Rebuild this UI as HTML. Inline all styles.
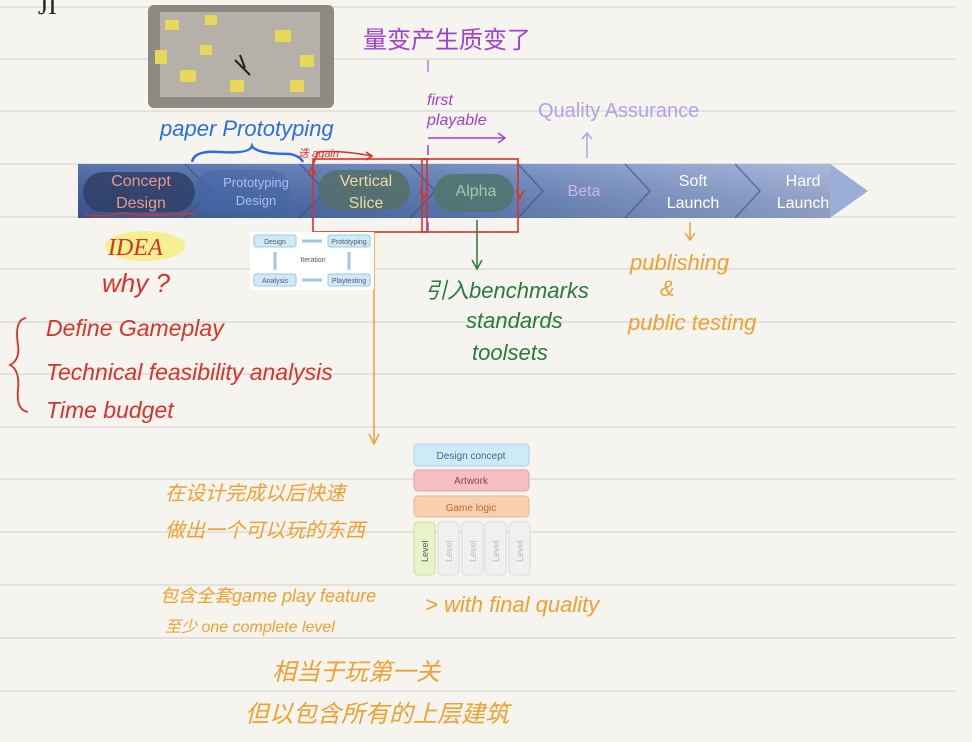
<!DOCTYPE html>
<html><head><meta charset="utf-8"><style>
body{margin:0;width:972px;height:742px;overflow:hidden;background:#f6f4ef;font-family:"Liberation Sans","Noto Sans CJK SC",sans-serif}
svg{position:absolute;left:0;top:0}
</style></head><body>
<svg width="972" height="742" viewBox="0 0 972 742" xmlns="http://www.w3.org/2000/svg">
<defs>
<linearGradient id="bar" x1="0" x2="1" y1="0" y2="0"><stop offset="0" stop-color="#3b5c9e"/><stop offset="0.5" stop-color="#5d7cb8"/><stop offset="1" stop-color="#9cadd6"/></linearGradient>
<linearGradient id="bv" x1="0" x2="0" y1="0" y2="1"><stop offset="0" stop-color="#fff" stop-opacity="0.15"/><stop offset="1" stop-color="#000" stop-opacity="0.1"/></linearGradient>
</defs>
<g stroke="#d9d7d1" stroke-width="1.3">
<line x1="0" y1="7" x2="955" y2="7"/><line x1="0" y1="59" x2="955" y2="59"/><line x1="0" y1="111" x2="955" y2="111"/><line x1="0" y1="164" x2="955" y2="164"/><line x1="0" y1="217" x2="955" y2="217"/><line x1="0" y1="269" x2="955" y2="269"/><line x1="0" y1="322" x2="955" y2="322"/><line x1="0" y1="374" x2="955" y2="374"/><line x1="0" y1="427" x2="955" y2="427"/><line x1="0" y1="479" x2="955" y2="479"/><line x1="0" y1="532" x2="955" y2="532"/><line x1="0" y1="585" x2="955" y2="585"/><line x1="0" y1="638" x2="955" y2="638"/><line x1="0" y1="691" x2="955" y2="691"/>
</g>
<text x="38" y="14" font-size="26" font-family="Liberation Serif" fill="#222">JI</text>
<!-- photo -->
<rect x="148" y="5" width="186" height="103" rx="6" fill="#8d8a84"/>
<rect x="160" y="12" width="160" height="85" fill="#b5b1a8"/>
<g fill="#e8d85a"><rect x="165" y="20" width="14" height="10"/><rect x="205" y="15" width="12" height="10"/><rect x="275" y="30" width="16" height="12"/><rect x="300" y="55" width="14" height="12"/><rect x="180" y="70" width="16" height="12"/><rect x="230" y="80" width="14" height="12"/><rect x="200" y="45" width="12" height="10"/><rect x="290" y="80" width="14" height="12"/><rect x="155" y="50" width="12" height="14"/></g>
<path d="M235 60 L250 75 M240 55 L245 68" stroke="#222" stroke-width="2"/>
<!-- bar -->
<rect x="78" y="164" width="752" height="54" fill="url(#bar)"/>
<path d="M830 164 L868 191 L830 218Z" fill="#9cadd6"/>
<rect x="78" y="164" width="752" height="54" fill="url(#bv)"/>
<g stroke="#2f4c85" stroke-opacity="0.6" fill="none" stroke-width="1.5">
<path d="M185 164 L210 191 L185 218"/><path d="M300 164 L325 191 L300 218"/><path d="M410 164 L435 191 L410 218"/><path d="M518 164 L543 191 L518 218"/><path d="M625 164 L650 191 L625 218"/><path d="M735 164 L760 191 L735 218"/></g>
<rect x="83" y="172" width="112" height="40" rx="20" fill="#2e3d63" opacity="0.8"/>
<rect x="195" y="170" width="95" height="42" rx="20" fill="#4668a8" opacity="0.6"/>
<rect x="318" y="170" width="92" height="40" rx="20" fill="#566e66" opacity="0.85"/>
<rect x="434" y="174" width="80" height="38" rx="19" fill="#4f7570" opacity="0.9"/>
<g font-size="16" text-anchor="middle">
<text x="141" y="186" fill="#e39a8a">Concept</text><text x="141" y="208" fill="#e39a8a">Design</text>
<text x="256" y="187" font-size="13" fill="#a9c0e8">Prototyping</text><text x="256" y="205" font-size="13" fill="#a9c0e8">Design</text>
<text x="366" y="186" fill="#e8dca8">Vertical</text><text x="366" y="208" fill="#e8dca8">Slice</text>
<text x="476" y="196" fill="#a8c8a8">Alpha</text>
<text x="584" y="196" fill="#c9b8e8">Beta</text>
<text x="693" y="186" fill="#fff">Soft</text><text x="693" y="208" fill="#fff">Launch</text>
<text x="803" y="186" fill="#fff">Hard</text><text x="803" y="208" fill="#fff">Launch</text>
</g>
<!-- red boxes -->
<g stroke="#d8322a" stroke-width="1.6" fill="none">
<rect x="313" y="159" width="114" height="73"/><rect x="422" y="159" width="96" height="73"/>
<path d="M313 165 L318 152 Q340 150 372 156 M366 152 l6 4 l-6 4"/><path d="M316 175 l-4 -8 l-4 8"/><path d="M420 190 l4 8 l4 -8"/><path d="M516 190 l4 8 l4 -8"/><path d="M371 237 l-6 4 l6 4"/>
<path d="M84 214 Q100 218 120 213 Q150 217 195 213"/></g>
<text x="298" y="157" font-size="11" fill="#d8322a" font-style="italic">迭 again</text>
<line x1="374" y1="232" x2="374" y2="442" stroke="#f0a030" stroke-width="1.5"/><path d="M369 434 l5 10 l5 -10" stroke="#f0a030" fill="none" stroke-width="1.5"/>
<!-- paper prototyping -->
<text x="160" y="136" font-size="22" fill="#2a6ee0" font-style="italic">paper  Prototyping</text>
<path d="M192 162 Q194 150 220 152 Q250 154 252 146 Q256 154 290 154 Q300 156 303 162" stroke="#2a6ee0" stroke-width="2.5" fill="none"/>
<!-- purple -->
<text x="363" y="48" font-size="24" fill="#a040d0">量变产生质变了</text>
<line x1="428" y1="60" x2="428" y2="72" stroke="#a040d0"/>
<text x="427" y="105" font-size="16" fill="#a040d0" font-style="italic">first</text>
<text x="427" y="125" font-size="16" fill="#a040d0" font-style="italic">playable</text>
<path d="M428 138 L505 138 M498 133 l7 5 l-7 5 M428 145 v10 M428 222 v10" stroke="#a040d0" stroke-width="1.5" fill="none"/>
<text x="538" y="117" font-size="20" fill="#b4a0e8">Quality Assurance</text>
<path d="M587 158 V133 M582 139 l5 -6 l5 6" stroke="#b4a0e8" stroke-width="1.5" fill="none"/>
<!-- iteration diagram -->
<rect x="250" y="232" width="124" height="58" fill="#fff"/>
<g fill="#cfeaf6" stroke="#9cc8e0"><rect x="254" y="235" width="42" height="12" rx="2"/><rect x="328" y="235" width="42" height="12" rx="2"/><rect x="254" y="274" width="42" height="12" rx="2"/><rect x="328" y="274" width="42" height="12" rx="2"/></g>
<g font-size="7" fill="#556" text-anchor="middle"><text x="275" y="244">Design</text><text x="349" y="244">Prototyping</text><text x="275" y="283">Analysis</text><text x="349" y="283">Playtesting</text><text x="313" y="262">Iteration</text></g>
<g fill="none" stroke="#9cc8e0" stroke-width="3"><path d="M302 241 H322"/><path d="M322 280 H302"/><path d="M275 270 V252"/><path d="M349 252 V270"/></g>
<!-- idea -->
<ellipse cx="145" cy="246" rx="40" ry="15" fill="#f5ef90"/>
<g fill="#d8322a" font-style="italic">
<text x="108" y="255" font-size="24" font-family="Liberation Serif">IDEA</text>
<text x="102" y="292" font-size="26">why ?</text>
<text x="46" y="336" font-size="23">Define  Gameplay</text>
<text x="46" y="380" font-size="23">Technical  feasibility  analysis</text>
<text x="46" y="418" font-size="23">Time  budget</text></g>
<path d="M26 318 Q14 320 18 345 Q20 360 10 365 Q20 370 18 390 Q16 410 28 412" stroke="#d8322a" stroke-width="1.8" fill="none"/>
<!-- green -->
<path d="M477 220 V268 M472 260 l5 9 l5 -9" stroke="#2a7a3a" stroke-width="1.5" fill="none"/>
<g fill="#2a7a3a" font-size="22" font-style="italic"><text x="425" y="298">引入benchmarks</text><text x="466" y="328">standards</text><text x="472" y="360">toolsets</text></g>
<!-- orange -->
<path d="M690 222 V240 M685 233 l5 7 l5 -7" stroke="#f0a030" stroke-width="1.5" fill="none"/>
<g fill="#f0a030" font-style="italic"><text x="630" y="270" font-size="22">publishing</text><text x="660" y="296" font-size="22">&amp;</text><text x="628" y="330" font-size="22">public  testing</text>
<text x="165" y="500" font-size="20">在设计完成以后快速</text><text x="165" y="537" font-size="20">做出一个可以玩的东西</text>
<text x="160" y="602" font-size="18">包含全套game play  feature</text><text x="165" y="632" font-size="16">至少 one  complete level</text>
<text x="425" y="612" font-size="22">&gt; with final quality</text>
<text x="272" y="680" font-size="24">相当于玩第一关</text><text x="245" y="722" font-size="24">但以包含所有的上层建筑</text></g>
<!-- stack -->
<rect x="414" y="444" width="115" height="22" rx="4" fill="#cdeaf7" stroke="#a8d4ec"/><text x="471" y="459" font-size="10" fill="#4a6a80" text-anchor="middle">Design concept</text>
<rect x="414" y="470" width="115" height="21" rx="4" fill="#f4c0c4" stroke="#e0a0a6"/><text x="471" y="484" font-size="10" fill="#8a4448" text-anchor="middle">Artwork</text>
<rect x="414" y="496" width="115" height="21" rx="4" fill="#f8d0b0" stroke="#ebb890"/><text x="471" y="511" font-size="10" fill="#b86a30" text-anchor="middle">Game logic</text>
<g stroke="#ddd"><rect x="414" y="522" width="21" height="53" rx="4" fill="#e8f4c8" stroke="#c8e098"/><rect x="438" y="522" width="21" height="53" rx="4" fill="#f0f0f0"/><rect x="462" y="522" width="21" height="53" rx="4" fill="#f0f0f0"/><rect x="485" y="522" width="21" height="53" rx="4" fill="#f0f0f0"/><rect x="509" y="522" width="21" height="53" rx="4" fill="#f0f0f0"/></g>
<g font-size="9" fill="#bbb"><text transform="translate(428,562) rotate(-90)" fill="#556">Level</text><text transform="translate(452,562) rotate(-90)">Level</text><text transform="translate(476,562) rotate(-90)">Level</text><text transform="translate(499,562) rotate(-90)">Level</text><text transform="translate(523,562) rotate(-90)">Level</text></g>
</svg>
</body></html>
